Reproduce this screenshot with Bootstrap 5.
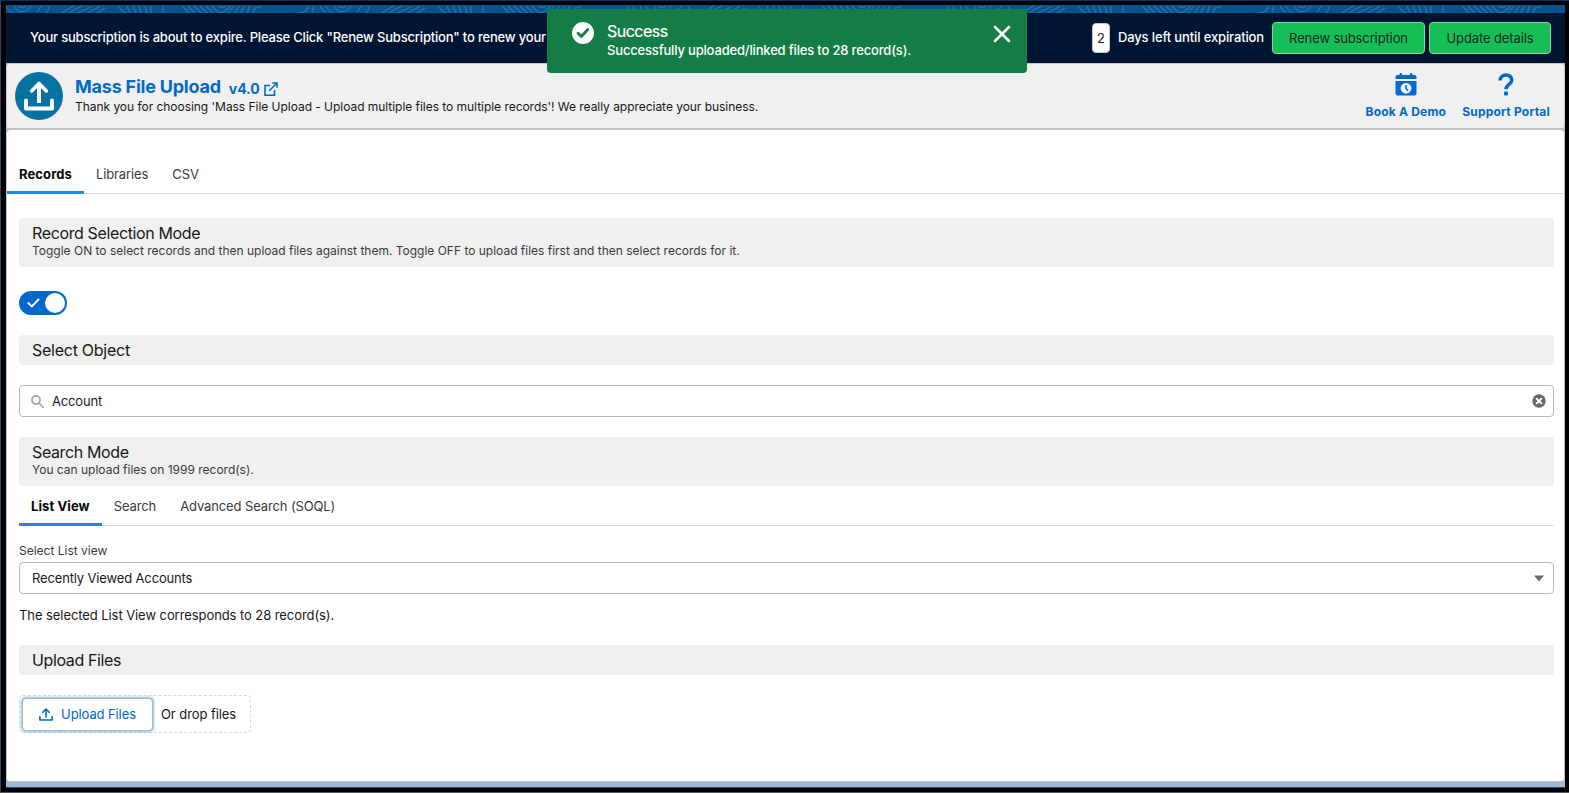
<!DOCTYPE html>
<html lang="en">
<head>
<meta charset="utf-8">
<meta name="viewport" content="width=device-width, initial-scale=1">
<title>Mass File Upload</title>
<link href="https://cdn.jsdelivr.net/npm/bootstrap@5.3.0/dist/css/bootstrap.min.css" rel="stylesheet">
<style>
body{font:13px/20px Inter,"Liberation Sans",sans-serif;color:#181818;background:#000;overflow:hidden}
svg{display:block;flex:none}
.page-frame{height:793px;padding:4px 4px 4px 5px;background:#000;border-style:solid;border-width:1px 0 1px 1px;border-color:#03305c #000 #4a5a68 #2b4767}
.page-bg{height:783px;background:#9fb8d8;border-bottom:1px solid #33465c}
.pattern-strip{height:8px;width:100%}
.expiry-bar{height:50px;background:#001532;color:#fff;padding:0 14px 1px 24px;font-weight:500}
.expiry-note{letter-spacing:-.185px;margin-bottom:1px}
.days-text{letter-spacing:-.13px;margin:0 8px 1px}
.day-count{width:18px;height:30px;border-radius:4px;background:#fff;color:#222;border:1px solid #c9c9c9;font-weight:400}
.btn-green{--bs-btn-bg:#16be58;--bs-btn-color:#0d2b1b;--bs-btn-border-color:#7fd79e;--bs-btn-hover-bg:#12a84d;--bs-btn-font-size:13px;--bs-btn-padding-x:16px;--bs-btn-padding-y:0;--bs-btn-border-radius:4px;height:32px;line-height:31px;letter-spacing:-.12px}
.btn-renew{width:153px}
.btn-update{width:122px;margin-left:4px}
.app-header{height:67px;background:#f0f0f0;border:1px solid #c9c9c9;border-bottom:2px solid #c1c1c1;border-radius:4px;padding:0 14px 0 8px}
.brand-blue,.brand-blue:hover{color:#0169c9;text-decoration:none}
.app-icon{width:48px;height:48px;background:#0572a3}
.app-title{font-size:18px;line-height:20px;font-weight:700;letter-spacing:-.22px}
.app-version{font-size:14px;line-height:20px;font-weight:700;letter-spacing:-.1px;margin:2px 0 0 8px}
.app-tagline{font-size:12px;line-height:16px;letter-spacing:-.038px}
.header-link{font-size:12px;line-height:16px;font-weight:700;letter-spacing:.2px}
.app-body{height:652px;background:#fff;border:1px solid #c3c3c3;border-top:0;border-radius:4px;padding-top:25px}
.line-tabs{border-bottom:1px solid #dcdcdc;height:39px}
.line-tabs .nav-link{padding:0 12px;height:39px;line-height:38px;color:#3a3a3a;border-radius:0;letter-spacing:-.1px}
.line-tabs .nav-link.active{font-weight:700;color:#080707;border-bottom:3px solid #1b85f3;letter-spacing:.1px}
.search-tabs{height:40px}
.search-tabs .nav-link{height:40px;line-height:40px;letter-spacing:-.12px}
.app-content{padding:24px 10px 0 12px}
.section-bar{background:#f0f0f0;border-radius:4px;padding:5px 13px 0;height:49px}
.section-bar.short-bar{height:30px}
.section-bar h2{font-size:16px;line-height:20px;font-weight:400;margin:0;letter-spacing:-.37px}
.section-bar .heading-loose{letter-spacing:-.26px}
.section-bar p{font-size:12px;line-height:15px;margin:0;color:#3a3a3a;letter-spacing:-.005px}
.mode-toggle{width:48px;height:24px;border-radius:12px;background:#0169c9;margin:24px 0 20px;padding:0 2px 0 8px}
.toggle-knob{width:20px;height:20px;background:#fff}
.field-box{height:32px;border:1px solid #b9b9b9;border-radius:4px;letter-spacing:-.15px;padding:0 7px 0 12px;line-height:30px}
.lookup-box{margin:20px 0;padding-left:11px}
.field-label{font-size:12px;line-height:16px;color:#3a3a3a;margin:17px 0 3px}
.match-count{letter-spacing:-.075px;margin:11px 0 20px}
.drop-area{width:232px;height:38px;border:1px dashed #d9d9d9;border-radius:4px;padding:1px 2px;margin-top:20px;letter-spacing:-.08px}
.btn-upload{--bs-btn-color:#0169c9;--bs-btn-bg:#fff;--bs-btn-border-color:#aeb9c6;--bs-btn-font-size:13px;--bs-btn-padding-x:0;--bs-btn-padding-y:0;--bs-btn-border-radius:4px;width:131px;height:33px;margin-top:1px;box-shadow:0 0 3px #0176d3;letter-spacing:-.1px}
.drop-hint{padding-left:8px;margin-bottom:1px}
.success-toast{left:547px;top:9px;width:480px;height:64px;background:#147c47;border-radius:4px;color:#fff;padding:0 16px 0 25px;z-index:10}
.toast-icon{margin-top:13px}
.toast-text{margin:12px 0 0 13px}
.toast-close{margin-top:16px}
.toast-heading{font-size:16px;line-height:20px;font-weight:400;letter-spacing:-.5px;-webkit-text-stroke:.2px #fff}
.toast-detail{font-weight:500;line-height:18px;letter-spacing:-.17px}
</style>
</head>
<body>
<div class="page-frame">
 <div class="page-bg">
  <svg class="pattern-strip" aria-hidden="true">
   <defs>
    <pattern id="topo" width="320" height="8" patternUnits="userSpaceOnUse">
     <g fill="none" stroke="#2f73a9" stroke-width="1.1">
      <path d="M0 1q2 5 7 7M8 1q3 6 9 5.500t8-5.500M12 1q3 3 8 0M31 7l4-6M40 8q3-3 3-7"/>
      <path d="M55 8l13-7M63 8l12-7M72 8l13-6M82 8l12-7M91 8l8-5M112 1q2 4 8 7"/>
      <path d="M121 1l3 7M127 1l3 7M133 1l2 7M139 1l2 7M145 1v7M157 8V1"/>
      <path d="M176 1l7 7M182 1l7 7M188 1l7 7M194 1l7 7M200 1l7 7M206 1l5 5q4 3 8 0l6-5M213 1q3 3 6 0"/>
      <path d="M222 8l6-7M229 8l4-7M235 8l3-7M241 8l3-7M247 8l2-5 6-1M293 8q9-1 9-7M306 8l2-7M314 1q1 4 6 6"/>
     </g>
    </pattern>
   </defs>
   <rect width="100%" height="8" fill="#045591"/>
   <rect width="100%" height="8" fill="url(#topo)"/>
  </svg>

  <div class="expiry-bar d-flex align-items-center">
   <span class="expiry-note text-nowrap">Your subscription is about to expire. Please Click "Renew Subscription" to renew your</span>
   <span class="day-count ms-auto d-flex align-items-center justify-content-center">2</span>
   <span class="days-text text-nowrap">Days left until expiration</span>
   <button class="btn btn-green btn-renew text-nowrap" type="button">Renew subscription</button>
   <button class="btn btn-green btn-update text-nowrap" type="button">Update details</button>
  </div>

  <header class="app-header d-flex align-items-center">
   <span class="app-icon rounded-circle d-flex">
    <svg width="48" height="48" viewBox="0 0 48 48" fill="none" stroke="#fff" stroke-width="4"><path d="M24 31V13"/><path d="M16.600 18.900l7.400-7.400 7.400 7.400" stroke-width="3.600" stroke-linecap="round" stroke-linejoin="round"/><path d="M11 28.500v8h26v-8" stroke-linecap="round" stroke-linejoin="round"/></svg>
   </span>
   <div class="flex-grow-1 ps-2">
    <div class="d-flex align-items-start ps-1">
     <a href="#" class="brand-blue app-title">Mass File Upload</a>
     <a href="#" class="brand-blue app-version d-flex align-items-center">v4.0
      <svg class="ms-1" width="14" height="14" viewBox="0 0 14 14" fill="none" stroke="#0169c9" stroke-width="1.600"><path d="M6 3.500H1v9.700h9.500V8M8.300 1H13v4.700M13 1L5.300 8.700"/></svg>
     </a>
    </div>
    <div class="app-tagline ps-1 text-nowrap">Thank you for choosing 'Mass File Upload - Upload multiple files to multiple records'! We really appreciate your business.</div>
   </div>
   <nav class="d-flex gap-3 text-nowrap">
    <a href="#" class="brand-blue header-link d-flex flex-column align-items-center">
     <svg class="mb-2" width="22" height="23" viewBox="0 0 22 23"><path fill="#0169c9" d="M4.500 1.300a1.300 1.300 0 0 1 2.600 0V2h7.800v-.7a1.300 1.300 0 0 1 2.600 0V2H19.500a2 2 0 0 1 2 2v2H.5V4a2 2 0 0 1 2-2h2zM.5 8h21v12.500a2 2 0 0 1-2 2h-17a2 2 0 0 1-2-2z"/><circle cx="11" cy="15.300" r="5.400" fill="#f0f0f0"/><path d="M11 12v3.500l2 2.200" fill="none" stroke="#0169c9" stroke-width="1.500"/></svg>
     Book A Demo
    </a>
    <a href="#" class="brand-blue header-link d-flex flex-column align-items-center">
     <svg class="mb-2" width="16" height="23" viewBox="0 0 16 23"><path d="M2.200 7.500C2.200 4 4.700 2 8 2s5.800 2.100 5.800 5.200c0 4.400-5.800 4-5.800 9" fill="none" stroke="#0169c9" stroke-width="3.500"/><rect x="6" y="18.600" width="4" height="4" rx=".8" fill="#0169c9"/></svg>
     Support Portal
    </a>
   </nav>
  </header>

  <main class="app-body">
   <ul class="nav line-tabs">
    <li class="nav-item"><a class="nav-link active" href="#">Records</a></li>
    <li class="nav-item"><a class="nav-link" href="#">Libraries</a></li>
    <li class="nav-item"><a class="nav-link" href="#">CSV</a></li>
   </ul>
   <div class="app-content">
    <section class="section-bar">
     <h2>Record Selection Mode</h2>
     <p>Toggle ON to select records and then upload files against them. Toggle OFF to upload files first and then select records for it.</p>
    </section>
    <div class="mode-toggle d-flex align-items-center justify-content-between" role="switch" aria-checked="true">
     <svg width="13" height="10" viewBox="0 0 13 10" fill="none" stroke="#fff" stroke-width="1.900" stroke-linecap="round"><path d="M1.300 5l3.500 3.500 6.700-7"/></svg>
     <span class="toggle-knob rounded-circle"></span>
    </div>
    <section class="section-bar short-bar"><h2 class="heading-loose">Select Object</h2></section>
    <div class="field-box lookup-box d-flex align-items-center">
     <svg width="13" height="13" viewBox="0 0 13 13" fill="none" stroke="#a3a3a3" stroke-width="1.700"><circle cx="5" cy="5" r="4.100"/><path d="M8 8l4.400 4.400" stroke-linecap="round"/></svg>
     <span class="ps-2">Account</span>
     <svg class="ms-auto" width="14" height="14" viewBox="0 0 14 14"><circle cx="7" cy="7" r="6.700" fill="#696969"/><path d="M4.600 4.600l4.800 4.800M9.400 4.600L4.600 9.400" stroke="#fff" stroke-width="1.800" stroke-linecap="round"/></svg>
    </div>
    <section class="section-bar">
     <h2>Search Mode</h2>
     <p>You can upload files on 1999 record(s).</p>
    </section>
    <ul class="nav line-tabs search-tabs">
     <li class="nav-item"><a class="nav-link active" href="#">List View</a></li>
     <li class="nav-item"><a class="nav-link" href="#">Search</a></li>
     <li class="nav-item"><a class="nav-link" href="#">Advanced Search (SOQL)</a></li>
    </ul>
    <div class="field-label">Select List view</div>
    <div class="field-box d-flex align-items-center">
     <span>Recently Viewed Accounts</span>
     <svg class="ms-auto" width="14" height="7" viewBox="0 0 14 7"><path d="M2 .5h10L7 6.500z" fill="#696969"/></svg>
    </div>
    <p class="match-count">The selected List View corresponds to 28 record(s).</p>
    <section class="section-bar short-bar"><h2>Upload Files</h2></section>
    <div class="drop-area d-flex">
     <button type="button" class="btn btn-upload d-flex align-items-center justify-content-center">
      <svg class="me-2" width="14" height="13" viewBox="0 0 14 13" fill="none" stroke="#0169c9" stroke-width="1.600" stroke-linecap="round" stroke-linejoin="round"><path d="M7 9V1.300M3.800 4.200L7 1l3.200 3.200M.9 8.500V12h12.200V8.500"/></svg>
      Upload Files
     </button>
     <span class="drop-hint align-self-center">Or drop files</span>
    </div>
   </div>
  </main>
 </div>
</div>

<div class="success-toast position-absolute d-flex" role="status">
 <svg class="toast-icon" width="22" height="22" viewBox="0 0 22 22"><circle cx="11" cy="11" r="11" fill="#fff"/><path d="M6 11.300l3.300 3.200 6.500-7" fill="none" stroke="#147c47" stroke-width="2.800" stroke-linecap="round" stroke-linejoin="round"/></svg>
 <div class="toast-text">
  <div class="toast-heading">Success</div>
  <div class="toast-detail text-nowrap">Successfully uploaded/linked files to 28 record(s).</div>
 </div>
 <svg class="toast-close ms-auto" width="18" height="18" viewBox="0 0 18 18" stroke="#fff" stroke-width="2.600" stroke-linecap="round"><path d="M2 2l14 14M16 2L2 16"/></svg>
</div>
<script src="https://cdn.jsdelivr.net/npm/bootstrap@5.3.0/dist/js/bootstrap.bundle.min.js"></script>
</body>
</html>
